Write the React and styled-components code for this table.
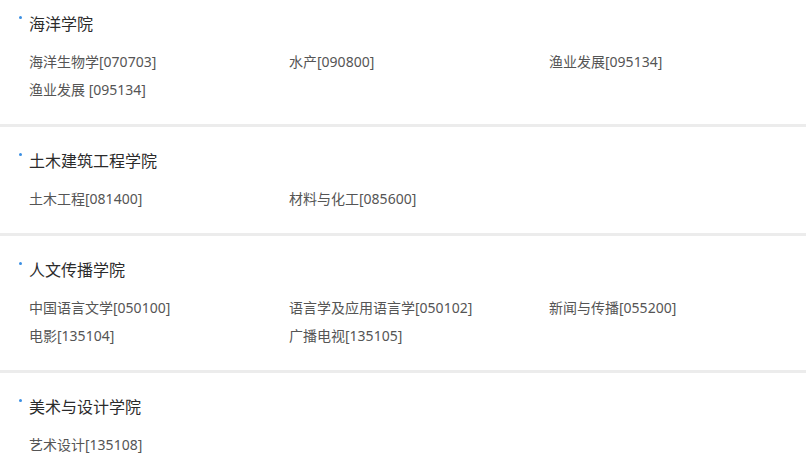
import React from "react";
import styled, { createGlobalStyle } from "styled-components";

const Global = createGlobalStyle`
  html, body { margin: 0; padding: 0; background: #fff; }
  body { font-family: "Noto Sans", "Noto Sans CJK SC", sans-serif; }
`;

const Page = styled.div`
  width: 806px;
  display: flex;
  flex-direction: column;
`;

const Section = styled.section`
  padding: ${(p) => (p.$first ? "12px" : "22px")} 29px 20px;
  border-top: ${(p) => (p.$first ? "none" : "3px solid #ececec")};
`;

const Title = styled.h3`
  position: relative;
  margin: 0;
  font-size: 16px;
  line-height: 24px;
  font-weight: 400;
  color: #2b2b2b;
  &::before {
    content: "";
    position: absolute;
    left: -10px;
    top: 4px;
    width: 3px;
    height: 3px;
    border-radius: 50%;
    background: #3b8fe3;
  }
`;

const Grid = styled.ul`
  list-style: none;
  margin: 12px 0 0;
  padding: 0;
  display: grid;
  grid-template-columns: 260px 260px 1fr;
`;

const Item = styled.li`
  font-size: 14px;
  line-height: 28px;
  color: #555;
  white-space: nowrap;
`;

const data = [
  {
    name: "海洋学院",
    items: ["海洋生物学[070703]", "水产[090800]", "渔业发展[095134]", "渔业发展 [095134]"],
  },
  { name: "土木建筑工程学院", items: ["土木工程[081400]", "材料与化工[085600]"] },
  {
    name: "人文传播学院",
    items: [
      "中国语言文学[050100]",
      "语言学及应用语言学[050102]",
      "新闻与传播[055200]",
      "电影[135104]",
      "广播电视[135105]",
    ],
  },
  { name: "美术与设计学院", items: ["艺术设计[135108]"] },
];

export default function App() {
  return (
    <>
      <Global />
      <Page>
        {data.map((s, i) => (
          <Section key={s.name} $first={i === 0}>
            <Title>{s.name}</Title>
            <Grid>
              {s.items.map((it) => (
                <Item key={it}>{it}</Item>
              ))}
            </Grid>
          </Section>
        ))}
      </Page>
    </>
  );
}
